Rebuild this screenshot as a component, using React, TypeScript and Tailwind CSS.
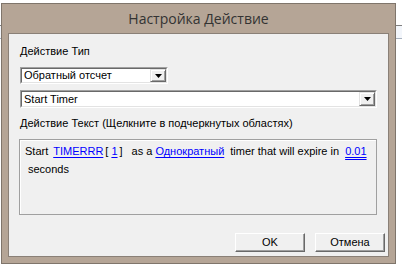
import React from 'react';

const ui = { fontFamily: '"Liberation Sans", Arial, sans-serif' };

const DropArrow = () => (
    <div className="flex h-full w-[16px] shrink-0 items-center justify-center border border-t-[#e3e3e3] border-l-[#e3e3e3] border-r-[#696969] border-b-[#696969] bg-[#f0f0f0] shadow-[inset_1px_1px_0_#ffffff,inset_-1px_-1px_0_#a0a0a0]">
        <svg width="7" height="4" viewBox="0 0 7 4">
            <path d="M0 0h7L3.5 4z" fill="#000" />
        </svg>
    </div>
);

const Combo = ({ value, className }: { value: string; className: string }) => (
    <div className={`flex items-stretch border border-t-[#a0a0a0] border-l-[#a0a0a0] border-r-[#ffffff] border-b-[#ffffff] ${className}`}>
        <div className="flex flex-1 items-stretch border border-t-[#696969] border-l-[#696969] border-r-[#e3e3e3] border-b-[#e3e3e3] bg-white">
            <div className="flex flex-1 items-center pl-[2px] text-[11px] text-black">{value}</div>
            <DropArrow />
        </div>
    </div>
);

const Btn = ({ label }: { label: string }) => (
    <div className="flex h-[19px] w-[70px] items-center justify-center border border-t-[#ffffff] border-l-[#ffffff] border-r-[#696969] border-b-[#696969] bg-[#f0f0f0] text-[11px] text-black shadow-[inset_-1px_-1px_0_#a0a0a0]">
        {label}
    </div>
);

const Link = ({ children, double, className = '' }: { children: React.ReactNode; double?: boolean; className?: string }) => (
    <span
        className={`text-[#0000ff] underline underline-offset-[2px] ${double ? 'decoration-double' : ''} ${className}`}
    >
        {children}
    </span>
);

export default function App() {
    return (
        <div className="relative h-[274px] w-[402px] overflow-hidden bg-white" style={ui}>
            {/* window behind the dialog */}
            <div className="absolute left-0 top-[25px] h-[14px] w-full border-t border-b border-t-[#808080] border-b-[#a8b2bf] bg-[#f3f6fb]" />

            <div className="relative ml-[1px] mt-[3px] flex h-[261px] w-[395px] flex-col border border-[#7f756b] bg-[#b5a596] px-[6px] pb-[6px]">
                <div
                    className="flex h-[29px] items-center justify-center text-[14px] text-[#333333]"
                    style={{ fontFamily: '"Open Sans", "Noto Sans", sans-serif' }}
                >
                    Настройка Действие
                </div>

                <div className="flex flex-1 flex-col border border-[#8a8077] bg-[#f0f0f0] pl-[11px] pr-[3px] pt-[11px]">
                    <div className="h-[13px] text-[11px] leading-[13px] text-black">Действие Тип</div>

                    <Combo value="Обратный отсчет" className="mt-[9px] h-[17px] w-[148px]" />
                    <Combo value="Start Timer" className="mt-[6px] h-[18px] w-[357px]" />

                    <div className="mt-[9px] h-[13px] text-[11px] leading-[13px] text-black">
                        Действие Текст (Щелкните в подчеркнутых областях)
                    </div>

                    <div className="-ml-[1px] mt-[9px] h-[76px] w-[358px] border border-[#a0a0a0] bg-[#f0f0f0] pl-[5px] pt-[2px] text-[11px] leading-[18px] text-black shadow-[inset_1px_1px_0_#ffffff]">
                        <div className="flex whitespace-nowrap">
                            <span>Start</span>
                            <Link className="ml-[5px]">TIMERRR</Link>
                            <span className="ml-[2px]">[</span>
                            <Link className="ml-[3px]">1</Link>
                            <span className="ml-[2px]">]</span>
                            <span className="ml-[9px]">as a</span>
                            <Link className="ml-[3px]">Однократный</Link>
                            <span className="ml-[6px]">timer that will expire in</span>
                            <Link double className="ml-[6px]">0.01</Link>
                        </div>
                        <div className="pl-[3px]">seconds</div>
                    </div>

                    <div className="mt-auto flex justify-end gap-[10px] pb-[4px]">
                        <Btn label="OK" />
                        <Btn label="Отмена" />
                    </div>
                </div>
            </div>
        </div>
    );
}
